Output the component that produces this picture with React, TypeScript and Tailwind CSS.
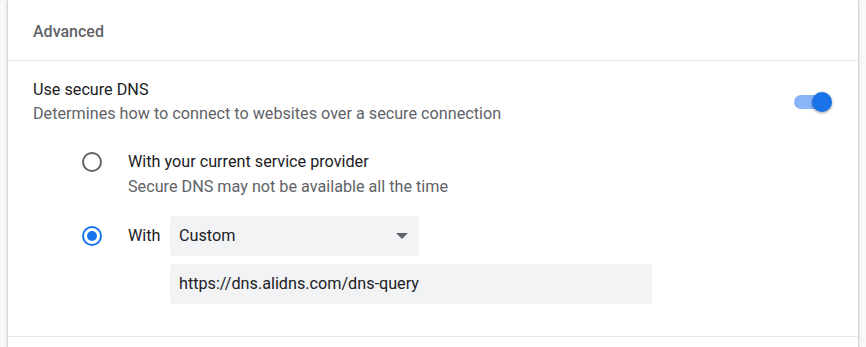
export default function App() {
  return (
    <div className="flex h-[347px] w-[866px] overflow-hidden bg-[#f8f9fa] px-[8px] font-['Roboto',sans-serif]">
      <div className="flex h-[360px] w-full flex-col bg-white shadow-[0_1px_2px_0_rgba(60,64,67,0.3),0_1px_3px_1px_rgba(60,64,67,0.15)]">
        <div className="flex h-[61px] shrink-0 items-center border-b border-[#e8eaed] pl-[25px] pt-[4px] text-[16px] font-medium text-[#5f6368]">
          Advanced
        </div>

        <div className="flex items-center pl-[25px] pr-[25px] pt-[17px]">
          <div className="flex-1 text-[16.2px] leading-[24px]">
            <div className="text-[#202124]">Use secure DNS</div>
            <div className="text-[#5f6368]">
              Determines how to connect to websites over a secure connection
            </div>
          </div>
          <Toggle />
        </div>

        <div className="mt-[24px] flex pl-[74px]">
          <div className="flex h-[24px] w-[20px] items-center">
            <span className="h-[20px] w-[20px] rounded-full border-2 border-[#5f6368]" />
          </div>
          <div className="ml-[26px] text-[16.2px] leading-[24px]">
            <div className="text-[#202124]">With your current service provider</div>
            <div className="mt-[1px] text-[#5f6368]">Secure DNS may not be available all the time</div>
          </div>
        </div>

        <div className="mt-[17px] flex pl-[74px]">
          <div className="flex h-[40px] w-[20px] items-center">
            <span className="flex h-[20px] w-[20px] items-center justify-center rounded-full border-2 border-[#1a73e8]">
              <span className="h-[10px] w-[10px] rounded-full bg-[#1a73e8]" />
            </span>
          </div>
          <div className="ml-[26px] flex flex-col text-[16.2px] text-[#202124]">
            <div className="flex items-center">
              <span className="w-[42px]">With</span>
              <div className="flex h-[40px] w-[249px] items-center justify-between rounded-[4px] bg-[#f1f3f4] pl-[9px] pr-[11px]">
                <span>Custom</span>
                <svg width="12" height="6" viewBox="0 0 12 6">
                  <path d="M0 0h12L6 6z" fill="#5f6368" />
                </svg>
              </div>
            </div>
            <div className="ml-[42px] mt-[8px] flex h-[40px] w-[482px] items-center rounded-[4px] bg-[#f1f3f4] pl-[9px]">
              https://dns.alidns.com/dns-query
            </div>
          </div>
        </div>

        <div className="mt-[32px] border-b border-[#e8eaed]" />
      </div>
    </div>
  );
}

function Toggle() {
  return (
    <div className="relative h-[20px] w-[40px]">
      <div className="absolute left-[1px] top-[3px] h-[14px] w-[32px] rounded-full bg-[#8ab4f8]" />
      <div className="absolute left-[19px] top-0 h-[20px] w-[20px] rounded-full bg-[#1a73e8] shadow-[0_1px_3px_0_rgba(0,0,0,0.4)]" />
    </div>
  );
}
